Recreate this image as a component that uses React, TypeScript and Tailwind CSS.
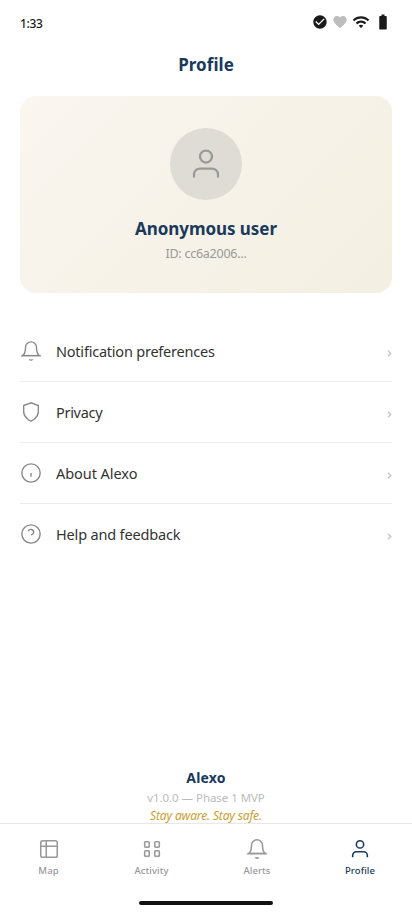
import type { ReactNode } from "react";

type IconProps = { size?: number; weight?: number; children: ReactNode };

function Icon({ size = 22, weight = 1.5, children }: IconProps) {
  return (
    <svg width={size} height={size} viewBox="0 0 24 24" fill="none" stroke="currentColor" strokeWidth={weight} className="shrink-0">
      {children}
    </svg>
  );
}

const bell = (
  <>
    <path d="M18 8A6 6 0 0 0 6 8c0 7-3 9-3 9h18s-3-2-3-9" strokeLinejoin="miter" />
    <path d="M1.5 17h21" />
    <path d="M13.73 21a2 2 0 0 1-3.46 0" />
  </>
);
const person = (
  <>
    <path d="M20 21v-2a4 4 0 0 0-4-4H8a4 4 0 0 0-4 4v2" />
    <circle cx="12" cy="7" r="4" />
  </>
);
const shield = <path d="M12 22s8-4 8-10V5l-8-3-8 3v7c0 6 8 10 8 10z" />;
const info = (
  <>
    <circle cx="12" cy="12" r="10" />
    <path d="M12 16v-4" />
  </>
);
const help = (
  <>
    <circle cx="12" cy="12" r="10" />
    <path d="M9.09 9a3 3 0 0 1 5.83 1c0 2-3 3-3 3" />
  </>
);
const map = (
  <>
    <rect x="3" y="3" width="18" height="18" rx="2" />
    <path d="M3 9h18M9 21V3" />
  </>
);
const grid = (
  <>
    <rect x="4" y="4" width="5" height="6" rx="1" />
    <rect x="15" y="4" width="5" height="6" rx="1" />
    <rect x="4" y="14" width="5" height="6" rx="1" />
    <rect x="15" y="14" width="5" height="6" rx="1" />
  </>
);

const rows = [
  { label: "Notification preferences", icon: bell, tracking: "tracking-[-0.22px]" },
  { label: "Privacy", icon: shield, tracking: "tracking-[-0.3px]" },
  { label: "About Alexo", icon: info, tracking: "tracking-[-0.05px]" },
  { label: "Help and feedback", icon: help, tracking: "tracking-[-0.17px]" },
];

const tabs = [
  { label: "Map", icon: map, style: "w-[97px] text-[#999999]" },
  { label: "Activity", icon: grid, style: "w-[109px] text-[#999999]" },
  { label: "Alerts", icon: bell, style: "w-[102px] text-[#999999]" },
  { label: "Profile", icon: person, style: "w-[104px] text-[#1a3a5c]" },
];

function StatusBar() {
  return (
    <header className="flex h-11 items-center justify-between pl-5 pr-[25px]">
      <span className="pt-[3px] text-[12px] font-medium leading-4 tracking-[-0.3px] text-[#1a1a1a]">1:33</span>
      <div className="flex items-center text-[#1a1a1a]">
        <svg width="16" height="16" viewBox="0 0 24 24" fill="currentColor">
          <path d="M12 2C6.48 2 2 6.48 2 12s4.48 10 10 10 10-4.48 10-10S17.52 2 12 2zm-2 15-5-5 1.41-1.41L10 14.17l7.59-7.59L19 8l-9 9z" />
        </svg>
        <svg width="16" height="16" viewBox="0 0 24 24" fill="#bdbdbd" className="ml-1">
          <path d="m12 21.35-1.45-1.32C5.4 15.36 2 12.28 2 8.5 2 5.42 4.42 3 7.5 3c1.74 0 3.41.81 4.5 2.09C13.09 3.81 14.76 3 16.5 3 19.58 3 22 5.42 22 8.5c0 3.78-3.4 6.86-8.55 11.54L12 21.35z" />
        </svg>
        <svg width="18" height="18" viewBox="0 0 24 24" fill="currentColor" className="ml-1">
          <path d="m1 9 2 2c4.97-4.97 13.03-4.97 18 0l2-2C16.93 2.93 7.08 2.93 1 9zm8 8 3 3 3-3c-1.65-1.66-4.34-1.66-6 0zm-4-4 2 2c2.76-2.76 7.24-2.76 10 0l2-2C15.14 9.14 8.87 9.14 5 13z" />
        </svg>
        <svg width="18" height="18" viewBox="0 0 24 24" fill="currentColor" className="-mr-[5px] ml-1">
          <path d="M15.67 4H14V2h-4v2H8.33C7.6 4 7 4.6 7 5.33v15.33C7 21.4 7.6 22 8.33 22h7.33c.74 0 1.34-.6 1.34-1.33V5.33C17 4.6 16.4 4 15.67 4z" />
        </svg>
      </div>
    </header>
  );
}

export default function App() {
  return (
    <div className="flex h-[915px] w-[412px] flex-col overflow-hidden bg-white font-['Noto_Sans',sans-serif]">
      <StatusBar />
      <h1 className="mt-[9px] text-center text-[17px] font-bold leading-6 tracking-[0.05px] text-[#1a3a5c]">Profile</h1>
      <section className="mx-5 mt-[19px] flex h-[197px] shrink-0 flex-col items-center rounded-2xl bg-linear-135 from-[#faf6f0] to-[#f3efe1] pt-8">
        <div className="flex size-[72px] items-center justify-center rounded-full bg-[#dfdcd6] text-[#999999]">
          <Icon size={36}>{person}</Icon>
        </div>
        <h2 className="mt-[17px] text-[17px] font-bold leading-6 tracking-[-0.05px] text-[#1a3a5c]">Anonymous user</h2>
        <p className="mt-1 text-[12.5px] leading-[18px] tracking-[-0.25px] text-[#999999]">ID: cc6a2006...</p>
      </section>
      <nav className="mx-5 mt-7">
        {rows.map((r) => (
          <button key={r.label} className="flex h-[61px] w-full items-center border-b border-[#eeeeee] text-left text-[#888888] last:border-transparent">
            <Icon>{r.icon}</Icon>
            <span className={`ml-3.5 flex-1 text-[14.5px] leading-5 text-[#333333] ${r.tracking}`}>{r.label}</span>
            <svg width="5" height="7" viewBox="0 0 5 7" fill="none" stroke="#c4c4c4" strokeWidth="1.3" className="mt-[5px]">
              <path d="M1 0.7 3.8 3.5 1 6.3" />
            </svg>
          </button>
        ))}
      </nav>
      <footer className="mt-auto -mb-px flex flex-col items-center">
        <p className="text-[14px] font-bold leading-5 tracking-[0.2px] text-[#1a3a5c]">Alexo</p>
        <p className="text-[11.5px] leading-5 tracking-[-0.05px] text-[#bbbbbb]">v1.0.0 — Phase 1 MVP</p>
        <p className="text-[12px] italic leading-4 tracking-[-0.15px] text-[#c9a030]">Stay aware. Stay safe.</p>
      </footer>
      <nav className="flex h-[77px] shrink-0 border-t border-[#e8e8e8] pt-3.5">
        {tabs.map((t) => (
          <button key={t.label} className={`flex flex-col items-center ${t.style}`}>
            <Icon weight={1.7}>{t.icon}</Icon>
            <span className="mt-1 text-[9.5px] font-medium leading-[14px] tracking-[0.1px]">{t.label}</span>
          </button>
        ))}
      </nav>
      <div className="mx-auto mb-2.5 mt-px h-1 w-[134px] shrink-0 rounded-full bg-[#111111]" />
    </div>
  );
}
